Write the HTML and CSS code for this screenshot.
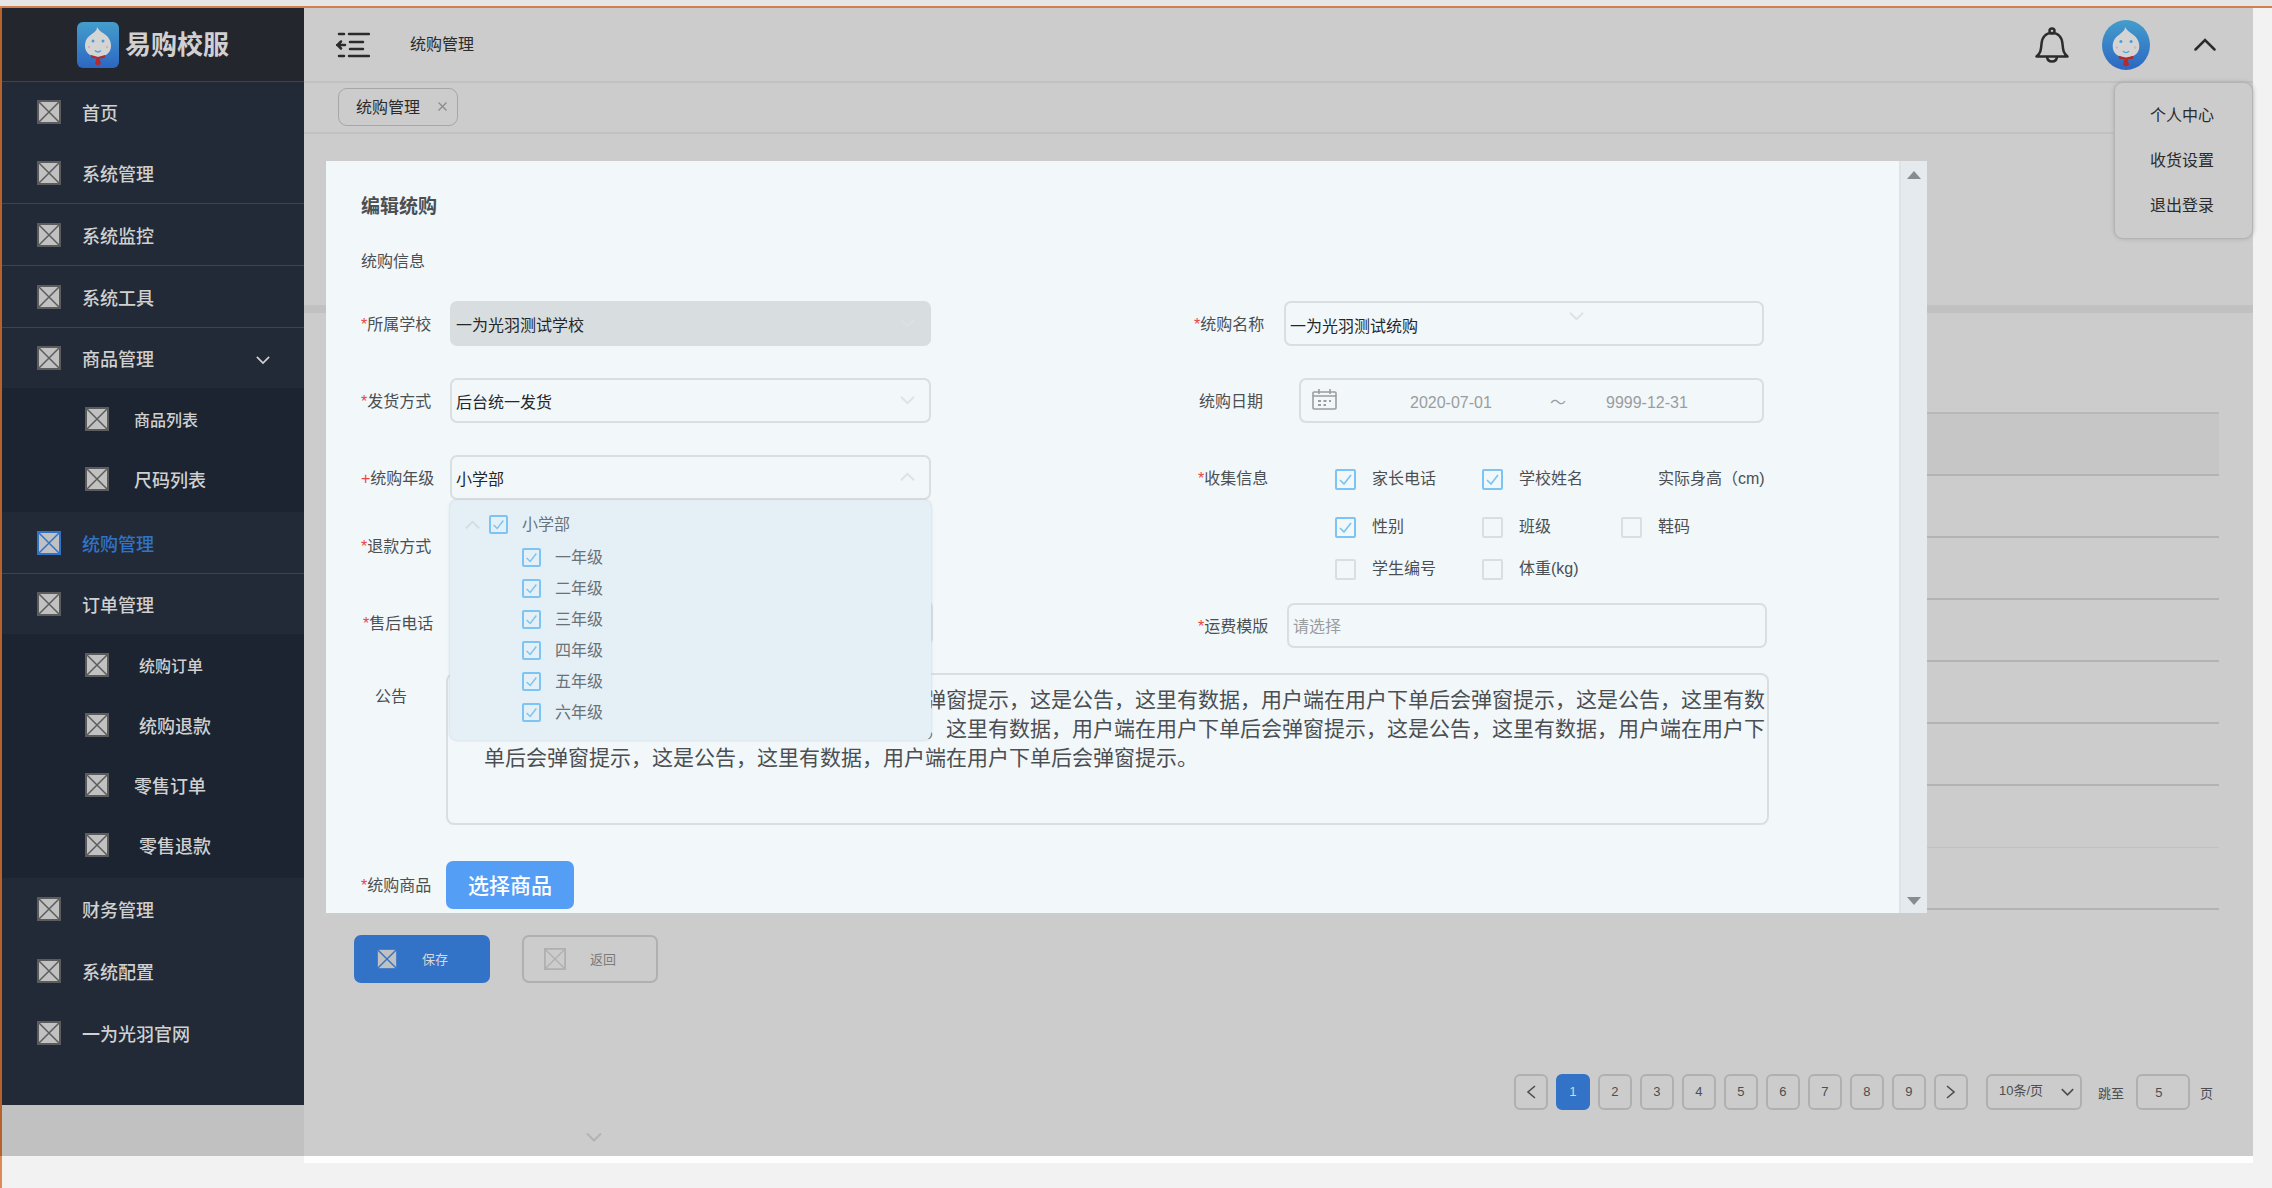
FILE: index.html
```html
<!DOCTYPE html>
<html lang="zh-CN">
<head>
<meta charset="utf-8">
<title>统购管理</title>
<link rel="stylesheet" href="styles.css">
</head>
<body>
<svg class="sprite" aria-hidden="true">
  <symbol id="box" viewBox="0 0 24 24"><rect x="1" y="1" width="22" height="22" fill="#c1c1c1" stroke="currentColor" stroke-width="2"/><path d="M1 1 23 23M23 1 1 23" stroke="currentColor" stroke-width="1.5" fill="none"/></symbol>
  <symbol id="box-plain" viewBox="0 0 24 24"><rect x="1" y="1" width="22" height="22" fill="none" stroke="currentColor" stroke-width="2"/><path d="M1 1 23 23M23 1 1 23" stroke="currentColor" stroke-width="1.5" fill="none"/></symbol>
  <symbol id="down" viewBox="0 0 16 10"><path d="M1 1.5 8 8.5 15 1.5" fill="none" stroke="currentColor" stroke-width="2"/></symbol>
  <symbol id="up" viewBox="0 0 16 10"><path d="M1 8.5 8 1.5 15 8.5" fill="none" stroke="currentColor" stroke-width="2"/></symbol>
  <linearGradient id="blue" x1="0" y1="0" x2="0" y2="1"><stop offset="0" stop-color="#449dcb"/><stop offset="1" stop-color="#2c67c3"/></linearGradient>
  <symbol id="face" viewBox="0 0 42 46">
    <path d="M20 5C20 9 17 10 15 12C10 15 8 19 8 24C8 31 14 35 21 35S34 31 34 24C34 18 31 14 26 11C23 9 22 8 20 5Z" fill="#d4d4d4"/>
    <circle cx="16" cy="19" r="1.5" fill="#48a0d8"/><circle cx="26" cy="19" r="1.5" fill="#48a0d8"/>
    <circle cx="12" cy="25" r="1.2" fill="#dcb0b4"/><circle cx="30" cy="25" r="1.2" fill="#dcb0b4"/>
    <path d="M18 28.5Q21 31.5 24 28.5" fill="none" stroke="#48a0d8" stroke-width="1.3"/>
    <path d="M14 33 21 35 28 33 28 36 22.5 36.5 24 42 21 43.5 18 42 19.5 36.5 14 36Z" fill="#b52a2a"/>
  </symbol>
</svg>
<div class="page">
  <aside class="sidebar">
    <nav class="nav">
      <a class="brand" href="#">
        <svg class="brand-logo" viewBox="0 0 42 46" aria-hidden="true"><rect width="42" height="46" rx="6" fill="url(#blue)"/><use href="#face" width="42" height="46"/></svg>
        <span>易购校服</span>
      </a>
      <a class="nav-item" href="#"><svg class="ico"><use href="#box"/></svg>首页</a>
      <a class="nav-item ruled" href="#"><svg class="ico"><use href="#box"/></svg>系统管理</a>
      <a class="nav-item ruled" href="#"><svg class="ico"><use href="#box"/></svg>系统监控</a>
      <a class="nav-item ruled" href="#"><svg class="ico"><use href="#box"/></svg>系统工具</a>
      <a class="nav-item" href="#"><svg class="ico"><use href="#box"/></svg>商品管理<svg class="nav-arrow"><use href="#down"/></svg></a>
      <div class="subnav">
        <a class="nav-item small" href="#"><svg class="ico"><use href="#box"/></svg>商品列表</a>
        <a class="nav-item" href="#"><svg class="ico"><use href="#box"/></svg>尺码列表</a>
      </div>
      <a class="nav-item ruled active" href="#"><svg class="ico"><use href="#box"/></svg>统购管理</a>
      <a class="nav-item" href="#"><svg class="ico"><use href="#box"/></svg>订单管理</a>
      <div class="subnav">
        <a class="nav-item small wide" href="#"><svg class="ico"><use href="#box"/></svg>统购订单</a>
        <a class="nav-item wide" href="#"><svg class="ico"><use href="#box"/></svg>统购退款</a>
        <a class="nav-item" href="#"><svg class="ico"><use href="#box"/></svg>零售订单</a>
        <a class="nav-item wide" href="#"><svg class="ico"><use href="#box"/></svg>零售退款</a>
      </div>
      <a class="nav-item tall" href="#"><svg class="ico"><use href="#box"/></svg>财务管理</a>
      <a class="nav-item tall" href="#"><svg class="ico"><use href="#box"/></svg>系统配置</a>
      <a class="nav-item tall" href="#"><svg class="ico"><use href="#box"/></svg>一为光羽官网</a>
    </nav>
  </aside>

  <main class="main">
    <header class="topbar">
      <button class="icon-btn" type="button" aria-label="收起菜单">
        <svg width="34" height="26" viewBox="0 0 34 26" fill="none" stroke="#2b2b2b" stroke-width="2.5" stroke-linecap="round"><path d="M3 2H8M13 2H33M14 10H27M14 17H27M3 24H8M13 24H33M1 13H9M5 9.5 1.5 13 5 16.5"/></svg>
      </button>
      <span class="crumb">统购管理</span>
      <button class="icon-btn bell" type="button" aria-label="通知">
        <svg width="34" height="36" viewBox="0 0 34 36" fill="none" stroke="#2b2b2b" stroke-width="2.5" stroke-linejoin="round" stroke-linecap="round"><circle cx="17" cy="4" r="2.5"/><path d="M1.5 29.5H32.5C28 26 28 22 27.5 17C27 10 23 6 17 6S7 10 6.5 17C6 22 6 26 1.5 29.5ZM12 30C12.5 33.5 14.5 34.5 17 34.5S21.5 33.5 22 30"/></svg>
      </button>
      <svg class="avatar" viewBox="0 0 48 50" aria-hidden="true"><ellipse cx="24" cy="25" rx="24" ry="25" fill="url(#blue)"/><use href="#face" x="2" y="2" width="44" height="47"/></svg>
      <button class="icon-btn" type="button" aria-label="账户菜单">
        <svg width="22" height="13" viewBox="0 0 22 13" fill="none" stroke="#2b2b2b" stroke-width="2.5" stroke-linecap="round"><path d="M1.5 11.5 11 2 20.5 11.5"/></svg>
      </button>
      <div class="user-menu">
        <a href="#">个人中心</a>
        <a href="#">收货设置</a>
        <a href="#">退出登录</a>
      </div>
    </header>
    <div class="tabbar">
      <div class="tab"><a href="#">统购管理</a><button type="button" aria-label="关闭"><svg width="9" height="9" viewBox="0 0 9 9" stroke="#8a8a8a" stroke-width="1.2"><path d="M.5.5 8.5 8.5M8.5.5.5 8.5"/></svg></button></div>
    </div>
    <div class="filters"></div>
    <div class="list">
      <table class="data" aria-label="统购列表">
        <thead><tr><th></th></tr></thead>
        <tbody>
          <tr><td></td></tr><tr><td></td></tr><tr><td></td></tr><tr><td></td></tr>
          <tr><td></td></tr><tr class="faint"><td></td></tr><tr><td></td></tr>
        </tbody>
      </table>
    </div>
    <div class="actions">
      <button class="btn save" type="button"><svg><use href="#box"/></svg>保存</button>
      <button class="btn back" type="button"><svg><use href="#box-plain"/></svg>返回</button>
    </div>
    <div class="pager">
      <div class="pages">
        <button type="button" aria-label="上一页"><svg width="10" height="14" viewBox="0 0 10 14" fill="none" stroke="currentColor" stroke-width="1.6"><path d="M9 1 2 7 9 13"/></svg></button>
        <button type="button" class="current">1</button>
        <button type="button">2</button>
        <button type="button">3</button>
        <button type="button">4</button>
        <button type="button">5</button>
        <button type="button">6</button>
        <button type="button">7</button>
        <button type="button">8</button>
        <button type="button">9</button>
        <button type="button" aria-label="下一页"><svg width="10" height="14" viewBox="0 0 10 14" fill="none" stroke="currentColor" stroke-width="1.6"><path d="M1 1 8 7 1 13"/></svg></button>
      </div>
      <div class="page-size">
        <select aria-label="每页条数"><option>10条/页</option></select>
        <svg><use href="#down"/></svg>
      </div>
      <label class="jump" for="jump">跳至</label>
      <input id="jump" type="text" value="5">
      <span class="unit">页</span>
    </div>
    <svg class="more"><use href="#down"/></svg>

    <section class="modal" role="dialog" aria-labelledby="modal-title">
      <form class="modal-body">
        <h1 id="modal-title">编辑统购</h1>
        <h2>统购信息</h2>
        <div class="cols">
          <div class="col">
            <div class="row">
              <label for="school"><i>*</i>所属学校</label>
              <div class="field"><select id="school" class="ctl" disabled><option>一为光羽测试学校</option></select><svg class="arrow pale"><use href="#down"/></svg></div>
            </div>
            <div class="row">
              <label for="ship"><i>*</i>发货方式</label>
              <div class="field"><select id="ship" class="ctl"><option>后台统一发货</option></select><svg class="arrow"><use href="#down"/></svg></div>
            </div>
            <div class="row open">
              <label for="grade"><i>+</i>统购年级</label>
              <div class="field">
                <select id="grade" class="ctl"><option>小学部</option></select><svg class="arrow"><use href="#up"/></svg>
                <div class="tree">
                  <div class="tree-root"><svg><use href="#up"/></svg><label class="check"><input type="checkbox" checked>小学部</label></div>
                  <label class="check"><input type="checkbox" checked>一年级</label>
                  <label class="check"><input type="checkbox" checked>二年级</label>
                  <label class="check"><input type="checkbox" checked>三年级</label>
                  <label class="check"><input type="checkbox" checked>四年级</label>
                  <label class="check"><input type="checkbox" checked>五年级</label>
                  <label class="check"><input type="checkbox" checked>六年级</label>
                </div>
              </div>
            </div>
            <div class="row">
              <label for="refund"><i>*</i>退款方式</label>
              <div class="field"><select id="refund" class="ctl"><option></option></select></div>
            </div>
            <div class="row shifted">
              <label for="phone"><i>*</i>售后电话</label>
              <div class="field"><input id="phone" class="ctl" type="text"></div>
            </div>
          </div>
          <div class="col">
            <div class="row inset">
              <label for="name"><i>*</i>统购名称</label>
              <div class="field"><input id="name" class="ctl" type="text" value="一为光羽测试统购"><svg class="arrow mid"><use href="#down"/></svg></div>
            </div>
            <div class="row inset date">
              <label for="from">统购日期</label>
              <div class="field ctl range">
                <svg width="25" height="21" viewBox="0 0 25 21" fill="none" stroke="#9a9d9f" stroke-width="1.6" aria-hidden="true"><rect x="1" y="3" width="23" height="17" rx="1"/><path d="M1 7H24M7 0V5M18 0V5"/><path d="M6 12H19M6 16H14" stroke-dasharray="3 2.5" stroke-width="2"/></svg>
                <input id="from" type="text" value="2020-07-01">
                <span>～</span>
                <input type="text" value="9999-12-31" aria-label="结束日期">
              </div>
            </div>
            <fieldset class="collect">
              <legend><i>*</i>收集信息</legend>
              <div class="checks">
                <label class="check"><input type="checkbox" checked>家长电话</label>
                <label class="check"><input type="checkbox" checked>学校姓名</label>
                <span class="plain">实际身高（cm)</span>
                <label class="check"><input type="checkbox" checked>性别</label>
                <label class="check"><input type="checkbox">班级</label>
                <label class="check"><input type="checkbox">鞋码</label>
                <label class="check"><input type="checkbox">学生编号</label>
                <label class="check"><input type="checkbox">体重(kg)</label>
              </div>
            </fieldset>
            <div class="row freight">
              <label for="freight"><i>*</i>运费模版</label>
              <div class="field"><input id="freight" class="ctl" type="text" placeholder="请选择"></div>
            </div>
          </div>
        </div>
        <div class="notice">
          <label for="notice">公告</label>
          <textarea id="notice">这是公告，这里有数据，用户端在用户下单后会弹窗提示，这是公告，这里有数据，用户端在用户下单后会弹窗提示，这是公告，这里有数据，用户端在用户下单后会弹窗提示，这是公告，这里有数据，用户端在用户下单后会弹窗提示，这是公告，这里有数据，用户端在用户下单后会弹窗提示，这是公告，这里有数据，用户端在用户下单后会弹窗提示。</textarea>
        </div>
        <div class="goods">
          <span><i>*</i>统购商品</span>
          <button type="button">选择商品</button>
        </div>
      </form>
      <div class="scroll" aria-hidden="true">
        <svg width="14" height="8"><path d="M0 8 7 0 14 8Z" fill="#878c8f"/></svg>
        <svg width="14" height="8"><path d="M0 0 7 8 14 0Z" fill="#878c8f"/></svg>
      </div>
    </section>
  </main>
</div>
</body>
</html>
```
FILE: styles.css
```css
* { box-sizing: border-box; }
body {
  margin: 0;
  padding-top: 6px;
  background: #e6e6e6;
  color: #4b4f52;
  font: 16px/24px "Liberation Sans", "Noto Sans CJK SC", sans-serif;
}
a { color: inherit; text-decoration: none; }
button, input, select, textarea { font: inherit; color: inherit; margin: 0; }
button { padding: 0; cursor: pointer; }
i { font-style: normal; color: #e8453c; }
.sprite { position: absolute; width: 0; height: 0; }

.page {
  display: grid;
  grid-template-columns: 302px minmax(0, 1fr);
  align-items: start;
  align-content: start;
  min-height: calc(100vh - 6px);
  padding-right: 19px;
  border-top: 2px solid #d2804b;
  border-left: 2px solid #dc8a56;
  background: #f2f2f2;
}

/* Sidebar */
.sidebar {
  align-self: stretch;
  margin: 0 0 7px -2px;
  border-left: 2px solid #b5622c;
  background: #c1c1c1;
}
.nav {
  padding-bottom: 41px;
  background: #212a36;
  color: #d0d0d0;
  font-size: 18px;
  font-weight: 500;
}
.brand {
  display: flex;
  align-items: center;
  gap: 6px;
  height: 74px;
  padding-left: 75px;
  border-bottom: 1px solid #3b444f;
  background: #24262e;
  font-size: 26px;
  font-weight: 700;
}
.brand-logo { width: 42px; height: 46px; }
.nav-item {
  display: flex;
  align-items: center;
  gap: 21px;
  height: 60px;
  padding: 4px 0 0 35px;
}
.nav-item.ruled { height: 62px; border-bottom: 1px solid #3b444f; }
.nav-item.tall { height: 62px; }
.nav-item.active { color: #3273c8; }
.ico { width: 24px; height: 24px; margin-bottom: 4px; color: #5c5c5c; }
.active .ico { color: #3273c8; }
.nav-arrow { width: 14px; height: 10px; margin: 0 34px 0 auto; }
.subnav { padding: 2px 0; background: #1b2430; }
.subnav .nav-item { padding: 2px 0 0 83px; gap: 25px; }
.subnav .wide { gap: 30px; }
.small { font-size: 16px; }

/* Main column */
.main {
  position: relative;
  display: flex;
  flex-direction: column;
  border-bottom: 7px solid #fff;
  background: #ccc;
}
.topbar {
  position: relative;
  display: flex;
  align-items: center;
  height: 75px;
  padding: 0 37px 0 32px;
  border-bottom: 2px solid #c1c1c1;
  color: #2b2b2b;
}
.icon-btn { display: flex; border: 0; background: none; }
.crumb { margin-left: 40px; }
.bell { margin-left: auto; }
.avatar { width: 48px; height: 50px; margin: 0 44px 0 33px; }
.user-menu {
  position: absolute;
  top: 74px;
  right: 0;
  z-index: 2;
  width: 139px;
  padding: 10px 0 10px 35px;
  border: 1px solid #b4b4b4;
  border-radius: 9px;
  background: #ccc;
  box-shadow: 0 0 4px #aaa;
  line-height: 45px;
}
.user-menu a { display: block; }
.tabbar {
  height: 51px;
  padding: 5px 34px;
  border-bottom: 2px solid #c1c1c1;
}
.tab {
  display: inline-flex;
  align-items: center;
  gap: 18px;
  height: 38px;
  padding: 2px 10px 0 17px;
  border: 1px solid #a6a6a6;
  border-radius: 9px;
  color: #2b2b2b;
}
.tab button { display: flex; margin-bottom: 4px; border: 0; background: none; }
.filters { height: 171px; }
.list { padding: 99px 34px 0; border-top: 8px solid #c1c1c1; }
.data { width: 100%; border-collapse: collapse; }
.data th, .data td { height: 62px; padding: 0; border-bottom: 2px solid #b3b3b3; }
.data th { border-top: 2px solid #b8b8b8; background: #c6c6c6; }
.data .faint td { border-bottom: 1px solid #c1c1c1; }

.actions { display: flex; gap: 32px; padding: 25px 50px 0; }
.btn {
  display: flex;
  align-items: center;
  gap: 24px;
  width: 136px;
  height: 48px;
  padding: 2px 0 0 20px;
  border-radius: 7px;
  font-size: 13px;
}
.btn svg { width: 22px; height: 22px; margin-bottom: 2px; }
.save { border: 2px solid #3273c8; background: #3273c8; color: #d8d8d8; }
.save svg { color: #3273c8; }
.back { border: 2px solid #b0b0b0; background: none; color: #7b7b7b; }
.back svg { color: #b0b0b0; }

.pager {
  display: flex;
  align-items: center;
  justify-content: flex-end;
  padding: 91px 40px 0 0;
  font-size: 13px;
}
.pages { display: flex; gap: 8px; }
.pages button {
  display: flex;
  align-items: center;
  justify-content: center;
  width: 34px;
  height: 36px;
  border: 2px solid #b0b0b0;
  border-radius: 6px;
  background: none;
}
.pages .current { border-color: #3273c8; background: #3273c8; color: #d8d8d8; }
.page-size { position: relative; margin-left: 18px; }
.page-size select {
  appearance: none;
  width: 96px;
  height: 36px;
  padding: 0 0 2px 11px;
  border: 2px solid #b0b0b0;
  border-radius: 6px;
  background: none;
}
.page-size svg { position: absolute; top: 13px; right: 8px; width: 13px; height: 10px; }
.jump { margin: 4px 12px 0 16px; }
.pager input {
  width: 54px;
  height: 36px;
  padding: 0 8px 0 0;
  border: 2px solid #b0b0b0;
  border-radius: 6px;
  background: none;
  text-align: center;
}
.unit { margin: 4px 0 0 10px; }
.more { width: 16px; height: 10px; margin: 22px 0 14px 282px; color: #b3b3b3; }

/* Edit dialog */
.modal {
  position: absolute;
  top: 153px;
  left: 22px;
  right: 326px;
  display: flex;
  background: #f2f7fa;
}
.modal-body { flex: 1; min-width: 0; padding: 32px 130px 4px 35px; }
.scroll {
  display: flex;
  flex-direction: column;
  align-items: center;
  justify-content: space-between;
  width: 28px;
  padding: 10px 0 8px;
  border-left: 2px solid #dde3e7;
  background: #e4eaee;
}
h1 { margin: 0; font-size: 19px; line-height: 28px; }
h2 { margin: 29px 0 27px; font-size: 16px; font-weight: 400; line-height: 24px; }
.cols {
  display: grid;
  grid-template-columns: minmax(0, 570fr) minmax(0, 575fr);
  column-gap: 263px;
}
.row { display: flex; align-items: center; margin-bottom: 32px; }
.row > label { flex: none; width: 89px; padding-top: 2px; white-space: nowrap; }
.field { position: relative; flex: 1; min-width: 0; }
.ctl {
  display: block;
  width: 100%;
  height: 45px;
  padding: 3px 4px 0;
  border: 2px solid #d9dee1;
  border-radius: 7px;
  background: none;
  color: #23272a;
  opacity: 1;
  appearance: none;
}
.ctl:disabled { border-color: #d8dddf; background: #d8dddf; }
.ctl::placeholder { color: #999da0; opacity: 1; }
select.ctl { padding-top: 5px; }
.arrow { position: absolute; top: 17px; right: 16px; width: 15px; height: 10px; color: #dde2e5; }
.arrow.pale { color: #dce1e3; }
.arrow.mid { top: 10px; right: 180px; }
.row.open { margin-bottom: 23px; }
.shifted { margin: 0 -2px 0 2px; }
.inset { margin-right: 5px; }
.inset > label { width: 90px; }
.date > label { width: 105px; padding-left: 5px; }
.range { display: flex; align-items: center; padding: 0 72px 0 11px; color: #9a9d9f; }
.range input {
  width: 84px;
  padding: 5px 0 0;
  border: 0;
  background: none;
}
.range svg { flex: none; margin: 0 auto 2px 0; }
.range span { margin: 5px 40px 0 56px; }

.check { display: flex; align-items: center; gap: 16px; white-space: nowrap; }
.check input {
  flex: none;
  width: 21px;
  height: 21px;
  border: 2px solid #d9dee1;
  border-radius: 2px;
  background: none;
  appearance: none;
}
.check input:checked {
  border-color: #7cc4f3;
  background: url("data:image/svg+xml,%3Csvg xmlns='http://www.w3.org/2000/svg' viewBox='0 0 17 17'%3E%3Cpath d='M3 9 7 13 14 4' fill='none' stroke='%237cc4f3' stroke-width='1.7'/%3E%3C/svg%3E") center / 100% no-repeat;
}
.tree {
  position: absolute;
  top: 45px;
  left: 0;
  right: 0;
  z-index: 1;
  padding: 7px 0 12px 72px;
  border-radius: 7px;
  background: #e5f0f6;
  box-shadow: 0 0 3px #bfccd3;
  color: #697278;
}
.tree .check { height: 31px; gap: 14px; }
.tree .check input { width: 19px; height: 19px; }
.tree-root { display: flex; align-items: center; gap: 9px; margin-left: -57px; height: 35px; }
.tree-root svg { width: 15px; height: 10px; color: #d3dde2; }

.collect {
  display: flex;
  margin: 0 0 16px 4px;
  padding: 0;
  border: 0;
}
.collect legend { float: left; width: 137px; padding: 0; line-height: 48px; }
.checks {
  display: grid;
  grid-template-columns: 147px 139px auto;
  grid-template-rows: 48px 48px 36px;
  align-items: center;
}
.plain { padding-left: 37px; white-space: nowrap; }
.freight { margin: 0 2px 25px 4px; }

.notice { display: flex; }
.notice label { flex: none; width: 85px; padding: 12px 0 0 14px; }
.notice textarea {
  flex: 1;
  height: 152px;
  padding: 10px 0 0 36px;
  border: 2px solid #d9dee1;
  border-radius: 8px;
  background: none;
  font-size: 21px;
  line-height: 29px;
  overflow: hidden;
  resize: none;
}
.goods { display: flex; align-items: center; margin-top: 36px; }
.goods span { width: 85px; padding-top: 2px; }
.goods button {
  width: 128px;
  height: 48px;
  padding-top: 2px;
  border: 0;
  border-radius: 7px;
  background: #559ef5;
  color: #fff;
  font-size: 21px;
  font-weight: 500;
}
```
